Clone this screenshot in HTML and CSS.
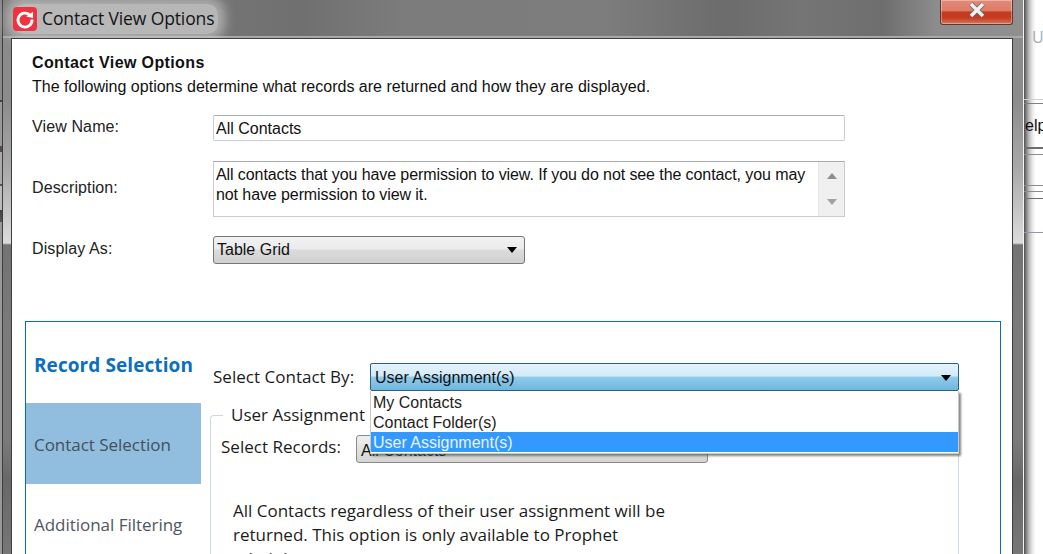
FILE: index.html
```html
<!DOCTYPE html>
<html lang="en">
<head>
<meta charset="utf-8">
<title>Contact View Options</title>
<link rel="stylesheet" href="styles.css">
</head>
<body>
<div class="desktop">
  <div class="left-strip"></div>
  <div class="back-app">
    <div class="back-u">U</div>
    <div class="back-line line-a"></div>
    <div class="back-help">elp</div>
    <div class="back-line line-b"></div>
    <div class="back-line line-c"></div>
    <div class="back-line line-d"></div>
    <div class="back-line line-e"></div>
    <div class="back-line line-f"></div>
    <div class="back-line line-g"></div>
    <div class="back-line line-h"></div>
  </div>
  <div class="window">
    <div class="titlebar">
      <div class="title-glow">
        <svg class="app-icon" viewBox="0 0 24 24" width="24" height="24" aria-hidden="true">
          <rect width="24" height="24" rx="4" fill="#ee3340"/>
          <path d="M16.8 8A7 7 0 1 0 19 12.5" fill="none" stroke="#fff" stroke-width="2.8"/>
          <path d="M13.2 9.6 L20 11 L20 4.8 Z" fill="#fff"/>
        </svg>
        <span class="title-text">Contact View Options</span>
      </div>
      <div class="close-btn">
        <svg viewBox="0 0 18 16" width="18" height="16" aria-hidden="true">
          <path d="M3 2 L15 14 M15 2 L3 14" stroke="#5a6068" stroke-width="5"/>
          <path d="M3 2 L15 14 M15 2 L3 14" stroke="#eef0f2" stroke-width="3.6"/>
        </svg>
      </div>
    </div>
    <div class="client">
      <div class="intro">
        <h1 class="heading">Contact View Options</h1>
        <p class="subheading">The following options determine what records are returned and how they are displayed.</p>
      </div>
      <div class="form-row row-name">
        <span class="form-label">View Name:</span>
        <div class="text-input">All Contacts</div>
      </div>
      <div class="form-row row-desc">
        <span class="form-label">Description:</span>
        <div class="text-area">
          <div class="area-text">All contacts that you have permission to view. If you do not see the contact, you may not have permission to view it.</div>
          <div class="scroll">
            <span class="arrow-up"></span>
            <span class="arrow-down"></span>
          </div>
        </div>
      </div>
      <div class="form-row row-display">
        <span class="form-label">Display As:</span>
        <div class="combo-gray">
          <span>Table Grid</span>
          <span class="caret"></span>
        </div>
      </div>
      <div class="panel">
        <aside class="side">
          <div class="side-title">Record Selection</div>
          <div class="side-item active">Contact Selection</div>
          <div class="side-item">Additional Filtering</div>
        </aside>
        <main class="main">
          <div class="select-row">
            <span class="select-label">Select Contact By:</span>
            <div class="combo-wrap">
              <div class="combo-blue">
                <span>User Assignment(s)</span>
                <span class="caret"></span>
              </div>
              <ul class="dropdown">
                <li>My Contacts</li>
                <li>Contact Folder(s)</li>
                <li class="selected">User Assignment(s)</li>
              </ul>
            </div>
          </div>
          <section class="group">
            <div class="legend">User Assignment</div>
            <div class="records-row">
              <span class="select-label">Select Records:</span>
              <div class="combo-records">All Contacts</div>
            </div>
            <p class="group-text">All Contacts regardless of their user assignment will be returned. This option is only available to Prophet administrators.</p>
          </section>
        </main>
      </div>
    </div>
  </div>
</div>
</body>
</html>
```
FILE: styles.css
```css
* { box-sizing: border-box; }
html, body { margin: 0; padding: 0; height: 100%; overflow: hidden; background: #fff; }
.desktop { position: relative; width: 1043px; height: 554px; overflow: hidden; background: #fff; font-family: "Liberation Sans", Arial, sans-serif; color: #111; }

.left-strip { position: absolute; left: 0; top: 0; width: 3px; height: 554px; border-right: 1px solid #3e3e3e;
  background: linear-gradient(180deg, #8a8a8a 0, #8a8a8a 100px, #444 100px, #444 102px, #999 102px, #999 146px, #5a4a4a 146px, #5a4a4a 152px, #aaa 152px, #aaa 184px, #555 184px, #555 186px, #bbb 186px, #bbb 210px, #444 210px, #555 222px, #999 222px, #999 554px); }

.back-app { position: absolute; left: 1024px; top: 0; width: 19px; height: 554px; background: linear-gradient(90deg, #4e4e4e 0, #7d7d7d 2px, #bdbdbd 5px, #eeeeee 9px, #fff 12px); }
.back-u { position: absolute; left: 8px; top: 26px; font: 16px "Open Sans", sans-serif; color: #a9adb1; }
.back-help { position: absolute; left: 1px; top: 117px; font-size: 16px; color: #111; }
.back-line { position: absolute; left: 0; right: 0; height: 1px; background: #a8a8a8; }
.line-a { top: 99px; background: #cfcfcf; }
.line-b { top: 103px; background: #808080; }
.line-c { top: 147px; height: 2px; background: #6e6e6e; }
.line-d { top: 154px; background: #8c8c8c; }
.line-e { top: 185px; background: #8c8c8c; }
.line-f { top: 191px; background: #8c8c8c; }
.line-g { top: 198px; background: #6e6e6e; }
.line-h { top: 232px; background: #8f99a6; }

.window { position: absolute; left: 3px; top: 0; width: 1021px; height: 554px; padding: 0 10px 0 8px; display: flex; flex-direction: column; border-right: 1px solid #f4f4f4;
  background: linear-gradient(180deg, #8b8b8b 38px, #8c8c8c 100px, #aaaaaa 170px, #dcdcdc 243px, #737373 245px, #7b7b7b 330px, #7b7b7b 440px, #686868 480px, #777 554px); }
.titlebar { height: 38px; margin: 0 -10px 0 -8px; padding-left: 10px; flex: none; display: flex; justify-content: space-between; align-items: flex-start; border-bottom: 2px solid #a8a8a8;
  background: linear-gradient(90deg, #7e7e7e 0, #707070 300px, #7c7c7c 400px, #7d7d7d 600px, #6c6c6c 720px, #757575 800px, #6e6e6e 880px, #8d8d8d 935px, #8f8f8f 1021px); }
.title-glow { height: 30px; margin-top: 4px; display: flex; align-items: center; gap: 5px; padding-right: 4px; background: rgba(208, 208, 208, .72); box-shadow: 0 0 11px 7px rgba(208, 208, 208, .6); border-radius: 10px; }
.app-icon { display: block; }
.title-text { font: 17.5px/24px "Open Sans", sans-serif; color: #141414; letter-spacing: -.12px; white-space: nowrap; padding-bottom: 3px; }
.close-btn { width: 73px; height: 25px; margin-right: 10px; display: flex; align-items: center; justify-content: center; padding-bottom: 5px; border: 1px solid #5b3a36; border-top: 0; border-radius: 0 0 3px 3px;
  background: linear-gradient(180deg, #e28a78 0, #dd7b68 45%, #c63a1e 50%, #c63c20 75%, #d47760 100%); box-shadow: inset 0 0 0 1px rgba(255,255,255,.35); }

.client { flex: 1; background: #fff; border: 1px solid #3e3e3e; border-bottom: 0; padding: 13px 13px 0 13px; font-size: 16px; min-height: 0; }
.intro { padding-left: 7px; }
.heading { margin: 0; font-size: 16px; line-height: 22px; font-weight: 700; letter-spacing: .38px; }
.subheading { margin: 2px 0 0; line-height: 22px; letter-spacing: .01px; }

.form-row { display: flex; align-items: center; padding-left: 7px; }
.form-label { width: 181px; flex: none; color: #222; letter-spacing: .12px; padding-bottom: 2px; }
.row-name { margin-top: 17px; height: 26px; }
.text-input { width: 632px; height: 26px; line-height: 26px; padding-left: 2px; border: 1px solid #c9ccd2; border-top-color: #a9abaf; border-radius: 2px; }
.row-desc { margin-top: 20px; height: 56px; }
.text-area { width: 632px; height: 56px; display: flex; border: 1px solid #c9ccd2; border-top-color: #a9abaf; }
.area-text { flex: 1; padding: 3px 8px 0 2px; line-height: 20px; letter-spacing: -.09px; }
.scroll { width: 26px; flex: none; display: flex; flex-direction: column; align-items: center; justify-content: space-between; padding: 11px 0; background: #f0f0f0; border-left: 1px solid #e6e6e6; }
.arrow-up { border: 5px solid transparent; border-top: 0; border-bottom: 6px solid #8e8e8e; }
.arrow-down { border: 5px solid transparent; border-bottom: 0; border-top: 6px solid #a2a2a2; }
.row-display { margin-top: 19px; height: 28px; }
.combo-gray { width: 312px; height: 28px; padding: 0 6px 0 3px; display: flex; align-items: center; justify-content: space-between; border: 1px solid #767676; border-radius: 3px; background: linear-gradient(180deg, #f2f2f2 0, #ebebeb 45%, #dcdcdc 50%, #cfcfcf 100%); }
.caret { width: 0; height: 0; margin-right: 1px; border-left: 5.5px solid transparent; border-right: 5.5px solid transparent; border-top: 6px solid #000; }

.panel { margin-top: 57px; width: 976px; height: 300px; display: flex; border: 1px solid #0a6ebd; border-bottom: 0; }
.side { width: 175px; flex: none; font-family: "Open Sans", sans-serif; }
.side-title { height: 81px; padding: 30px 0 0 8px; font-size: 19px; line-height: 26px; font-weight: 700; color: #0a6fc2; white-space: nowrap; letter-spacing: .08px; }
.side-item { height: 81px; line-height: 82px; padding-left: 8px; font-size: 17px; color: #4f5660; letter-spacing: -.03px; white-space: nowrap; }
.side-item.active { line-height: 84px; background: #91bddf; color: #46505a; }

.main { flex: 1; padding: 41px 41px 0 10px; font-family: "Open Sans", sans-serif; min-width: 0; }
.select-row { display: flex; align-items: flex-start; padding-left: 2px; }
.select-label { font-size: 17px; line-height: 28px; letter-spacing: .02px; color: #1c1c1c; white-space: nowrap; }
.select-row .select-label { width: 157px; flex: none; }
.combo-wrap { position: relative; flex: 1; height: 28px; font-family: "Liberation Sans", Arial, sans-serif; }
.combo-blue { height: 28px; padding: 2px 6px 0 4px; display: flex; align-items: center; justify-content: space-between; border: 1px solid #2c5f86; border-radius: 2px; background: linear-gradient(180deg, #e4f3fc 0, #d2eaf9 45%, #8fcbea 52%, #6fb6df 100%); }
.dropdown { position: absolute; z-index: 3; left: 0; right: 0; top: 28px; margin: 0; padding: 1px 0; list-style: none; background: #fff; border: 1px solid #c8c8c8; border-top: 0; box-shadow: 2px 2px 2px rgba(70, 70, 70, .65); }
.dropdown li { height: 20px; line-height: 22px; padding-left: 2px; color: #222; }
.dropdown li.selected { background: #3399ff; color: #e8f3ff; }

.group { position: relative; margin-top: 24px; height: 200px; margin-left: -1px; padding: 17px 10px 0 10px; border: 1px solid #cfd9e3; border-bottom: 0; border-radius: 4px 4px 0 0; }
.legend { position: absolute; top: -13px; left: 12px; padding: 0 8px; background: #fff; font-size: 17px; line-height: 24px; color: #1c1c1c; white-space: nowrap; }
.records-row { display: flex; align-items: center; }
.records-row .select-label { width: 135px; flex: none; padding-bottom: 3px; }
.combo-records { width: 352px; height: 28px; overflow: hidden; padding: 0 4px; font: 16px/30px "Liberation Sans", Arial, sans-serif; border: 1px solid #8a8a8a; border-radius: 3px; background: linear-gradient(180deg, #f0f0f0, #d4d4d4); }
.group-text { margin: 35px 0 0 12px; width: 470px; font-size: 17px; line-height: 24px; color: #1c1c1c; }
```
